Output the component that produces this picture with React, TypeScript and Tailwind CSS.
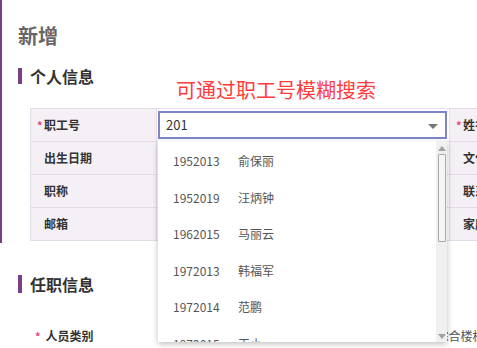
import React from "react";

const font = { fontFamily: '"Noto Sans CJK SC", "Noto Sans", sans-serif' };

function Label({ text, req }: { text: string; req?: boolean }) {
  return (
    <div className="h-[33px] bg-[#f4f0f6] border-r border-b border-[#e4dde8] flex items-center text-[12px] font-semibold text-[#333] whitespace-nowrap overflow-hidden">
      {req ? (
        <>
          <span className="pl-[6px] w-[13px] text-[#e8467f] text-[11px]">*</span>
          <span>{text}</span>
        </>
      ) : (
        <span className="pl-[13px]">{text}</span>
      )}
    </div>
  );
}

function Cell({ children }: { children?: React.ReactNode }) {
  return <div className="h-[33px] bg-white border-r border-b border-[#e4dde8] relative">{children}</div>;
}

const items = [
  ["1952013", "俞保丽"],
  ["1952019", "汪炳钟"],
  ["1962015", "马丽云"],
  ["1972013", "韩福军"],
  ["1972014", "范鹏"],
  ["1972015", "王小"],
];

export default function App() {
  return (
    <div className="relative w-[477px] h-[348px] overflow-hidden bg-white" style={font}>
      <div className="border-l-2 border-[#7a3f8a] h-[243px] pl-4">
        <div className="pt-[22px] text-[20px] leading-[28px] font-bold text-[#666]">新增</div>
        <div className="mt-[18px] flex items-center h-4">
          <div className="w-1 h-4 bg-[#7a3f8a]" />
          <div className="ml-2 text-[16px] leading-4 font-bold text-[#333] whitespace-nowrap">个人信息</div>
        </div>
        <div className="mt-6 ml-3 w-[600px] grid grid-cols-[126px_293px_126px_1fr] border-t border-l border-[#e4dde8]">
          <Label text="职工号" req />
          <Cell>
            <div className="absolute left-[1px] top-[2px] w-[289px] h-[28px] border-2 border-[#7d86c9] flex items-center pl-[6px] text-[13px] text-[#333]">
              201
              <span className="absolute right-[7px] top-[11px] w-0 h-0 border-l-[5px] border-r-[5px] border-t-[5px] border-l-transparent border-r-transparent border-t-[#777]" />
            </div>
          </Cell>
          <Label text="姓名" req />
          <Cell />
          <Label text="出生日期" />
          <Cell />
          <Label text="文化程度" />
          <Cell />
          <Label text="职称" />
          <Cell />
          <Label text="联系电话" />
          <Cell />
          <Label text="邮箱" />
          <Cell />
          <Label text="家庭住址" />
          <Cell />
        </div>
      </div>

      <div className="pl-[18px] w-[700px]">
        <div className="mt-[32px] flex items-center h-[18px]">
          <div className="w-1 h-[18px] bg-[#7a3f8a]" />
          <div className="ml-2 text-[16px] leading-4 font-bold text-[#333] whitespace-nowrap">任职信息</div>
        </div>
        <div className="mt-[33px] flex items-center h-5 text-[12px] font-semibold text-[#333] whitespace-nowrap">
          <span className="ml-[17px] text-[#e8467f] text-[11px]">*</span>
          <span className="ml-[5px]">人员类别</span>
          <span className="ml-[92px] w-3 h-3 rounded-full border border-[#aaa] shrink-0" />
          <span className="ml-[239px] font-normal text-[#555]">综合楼栋</span>
        </div>
      </div>

      <div className="absolute left-[176px] top-[79px] text-[20px] leading-[22px] text-[#ff3b3b] whitespace-nowrap">
        可通过职工号模糊搜索
      </div>

      <div className="absolute left-[158px] top-[141px] w-[289px] h-[201px] bg-white shadow-[0_2px_6px_rgba(0,0,0,0.25)] flex overflow-hidden">
        <div className="flex-1 pt-[2px]">
          {items.map(([n, name]) => (
            <div key={n} className="h-[36.5px] flex items-center pl-[15px] text-[12px] text-[#555] whitespace-nowrap">
              <span className="w-[65px]">{n}</span>
              <span>{name}</span>
            </div>
          ))}
        </div>
        <div className="w-[11px] h-full bg-[#f0f0f0] flex flex-col items-center">
          <span className="mt-[5px] w-0 h-0 border-l-[4px] border-r-[4px] border-b-[5px] border-l-transparent border-r-transparent border-b-[#a0a0a0]" />
          <div className="mt-[3px] w-[8px] h-[88px] bg-[#f5f5f5] border border-[#a8a8a8] rounded-[1px]" />
          <div className="flex-1" />
          <span className="mb-[3px] w-0 h-0 border-l-[4px] border-r-[4px] border-t-[5px] border-l-transparent border-r-transparent border-t-[#a0a0a0]" />
        </div>
      </div>
    </div>
  );
}
